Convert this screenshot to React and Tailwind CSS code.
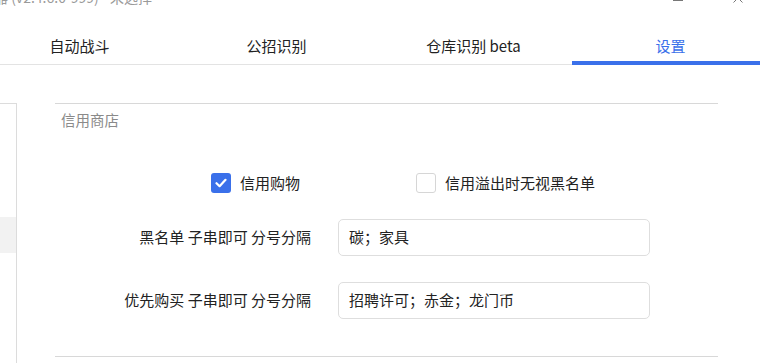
import React from 'react';

const tabs = ['自动战斗', '公招识别', '仓库识别 beta', '设置'];

function CheckBox({ checked, label }) {
  return (
    <label className="flex items-center w-[205px] h-[20px]">
      {checked ? (
        <span className="w-[20px] h-[20px] rounded-[3px] bg-[#3a70ea] flex items-center justify-center">
          <svg width="12" height="10" viewBox="0 0 12 10" fill="none">
            <path d="M1.5 5.2 L4.6 8.2 L10.5 1.8" stroke="white" strokeWidth="2.2" strokeLinecap="round" strokeLinejoin="round" />
          </svg>
        </span>
      ) : (
        <span className="w-[20px] h-[20px] rounded-[3px] border border-[#d6d6d6] bg-white" />
      )}
      <span className="ml-[9px] text-[15px] leading-[20px] text-[#222]">{label}</span>
    </label>
  );
}

function Field({ label, value }) {
  return (
    <div className="flex items-center">
      <div className="w-[256px] text-right text-[15px] text-[#222]">{label}</div>
      <div className="ml-[27px] w-[312px] h-[37px] rounded-[5px] border border-[#dedede] flex items-center px-[10px] text-[15px] text-[#222]">
        {value}
      </div>
    </div>
  );
}

export default function App() {
  return (
    <div
      className="w-[760px] h-[363px] overflow-hidden bg-white relative"
      style={{ fontFamily: '"Noto Sans CJK SC", "Microsoft YaHei", sans-serif' }}
    >
      {/* title bar, mostly scrolled off */}
      <div className="h-[22px] overflow-hidden relative">
        <div className="absolute top-[-13px] left-[-34px] text-[14px] text-[#9a9a9a] whitespace-nowrap">
          辅助器 (v2.4.6.0-999) - 未选择
        </div>
        <div className="absolute top-[-8px] left-[673px] w-[10px] h-[9px] border border-[#777]" />
        <svg className="absolute top-[-7px] left-[733px]" width="10" height="10" viewBox="0 0 10 10">
          <path d="M0.5 0.5 L9.5 9.5 M9.5 0.5 L0.5 9.5" stroke="#777" strokeWidth="1" />
        </svg>
      </div>

      {/* tabs */}
      <div className="h-[43px] border-b border-[#e3e3e3] flex">
        <div className="flex ml-[-19px]">
          {tabs.map((t, i) => (
            <div
              key={t}
              className={
                'w-[197px] h-[42px] flex items-center justify-center text-[15px] relative ' +
                (i === 3 ? 'text-[#3a70ea]' : 'text-[#222]')
              }
            >
              <span className="mt-[6px]">{t}</span>
              {i === 3 && <div className="absolute left-0 right-0 bottom-[-1px] h-[4px] bg-[#3a70ea]" />}
            </div>
          ))}
        </div>
      </div>

      <div className="flex">
        {/* side list */}
        <div className="w-[17px] mt-[38px] h-[300px] border-t border-r border-[#dcdcdc]">
          <div className="mt-[113px] h-[36px] bg-[#f2f2f2]" />
        </div>

        {/* group box */}
        <div className="ml-[38px] mt-[38px] w-[663px] h-[254px] border-t border-b border-[#d8d8d8]">
          <div className="pl-[6px] pt-[6px] h-[26px] text-[14.5px] leading-[20px] text-[#8a8a8a]">信用商店</div>
          <div className="flex ml-[156px] mt-[43px]">
            <CheckBox checked label="信用购物" />
            <CheckBox label="信用溢出时无视黑名单" />
          </div>
          <div className="mt-[26px]">
            <Field label="黑名单 子串即可 分号分隔" value="碳；家具" />
          </div>
          <div className="mt-[26px]">
            <Field label="优先购买 子串即可 分号分隔" value="招聘许可；赤金；龙门币" />
          </div>
        </div>
      </div>
    </div>
  );
}
